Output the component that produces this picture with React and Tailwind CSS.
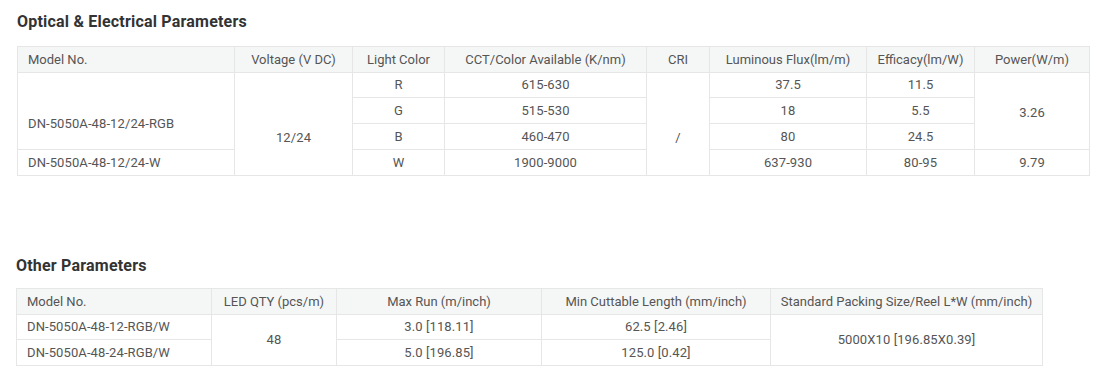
const optical = [
  { w: 217, label: "Model No.", left: true },
  { w: 118, label: "Voltage (V DC)" },
  { w: 92, label: "Light Color" },
  { w: 202, label: "CCT/Color Available (K/nm)" },
  { w: 63, label: "CRI" },
  { w: 157, label: "Luminous Flux(lm/m)" },
  { w: 108, label: "Efficacy(lm/W)" },
  { w: 115, label: "Power(W/m)" },
];

const other = [
  { w: 195, label: "Model No.", left: true },
  { w: 125, label: "LED QTY (pcs/m)" },
  { w: 205, label: "Max Run (m/inch)" },
  { w: 229, label: "Min Cuttable Length (mm/inch)" },
  { w: 272, label: "Standard Packing Size/Reel L*W (mm/inch)" },
];

const td = "border border-[#e6e6e6] text-center align-middle p-0";
const tdLeft = "border border-[#e6e6e6] text-left align-middle pl-[10px] p-0";

function Head({ cols }) {
  return (
    <>
      <colgroup>
        {cols.map((c, i) => (
          <col key={i} style={{ width: c.w }} />
        ))}
      </colgroup>
      <thead>
        <tr className="h-[26px] bg-[#f5f7f7]">
          {cols.map((c, i) => (
            <th
              key={i}
              className={`${c.left ? tdLeft : td} font-normal`}
            >
              {c.label}
            </th>
          ))}
        </tr>
      </thead>
    </>
  );
}

export default function App() {
  return (
    <div
      className="w-[1111px] h-[377px] bg-white text-[13px] text-[#555] leading-[20px]"
      style={{ fontFamily: "Roboto, 'Noto Sans', sans-serif" }}
    >
      <div className="pl-[17px] pt-[12px]">
        <h2 className="text-[16px] font-bold text-[#333] leading-[20px] tracking-[0.2px]">
          Optical &amp; Electrical Parameters
        </h2>

        <table className="mt-[14px] w-[1072px] table-fixed border-collapse">
          <Head cols={optical} />
          <tbody className="tracking-[0.1px]">
            <tr className="h-[25px]">
              <td rowSpan={3} className={`${tdLeft} pt-[26px]`}>DN-5050A-48-12/24-RGB</td>
              <td rowSpan={4} className={`${td} pt-[28px]`}>12/24</td>
              <td className={td}>R</td>
              <td className={td}>615-630</td>
              <td rowSpan={4} className={`${td} pt-[28px]`}>/</td>
              <td className={td}>37.5</td>
              <td className={td}>11.5</td>
              <td rowSpan={3} className={`${td} pt-[4px]`}>3.26</td>
            </tr>
            <tr className="h-[26px]">
              <td className={td}>G</td>
              <td className={td}>515-530</td>
              <td className={td}>18</td>
              <td className={td}>5.5</td>
            </tr>
            <tr className="h-[26px]">
              <td className={td}>B</td>
              <td className={td}>460-470</td>
              <td className={td}>80</td>
              <td className={td}>24.5</td>
            </tr>
            <tr className="h-[26px]">
              <td className={tdLeft}>DN-5050A-48-12/24-W</td>
              <td className={td}>W</td>
              <td className={td}>1900-9000</td>
              <td className={td}>637-930</td>
              <td className={td}>80-95</td>
              <td className={td}>9.79</td>
            </tr>
          </tbody>
        </table>
      </div>

      <div className="pl-[16px] pt-[80px]">
        <h2 className="text-[16px] font-bold text-[#333] leading-[20px] tracking-[0.2px]">
          Other Parameters
        </h2>

        <table className="mt-[12px] w-[1026px] table-fixed border-collapse">
          <Head cols={other} />
          <tbody className="tracking-[0.1px]">
            <tr className="h-[25px]">
              <td className={tdLeft}>DN-5050A-48-12-RGB/W</td>
              <td rowSpan={2} className={td}>48</td>
              <td className={td}>3.0 [118.11]</td>
              <td className={td}>62.5 [2.46]</td>
              <td rowSpan={2} className={td}>5000X10 [196.85X0.39]</td>
            </tr>
            <tr className="h-[26px]">
              <td className={tdLeft}>DN-5050A-48-24-RGB/W</td>
              <td className={td}>5.0 [196.85]</td>
              <td className={td}>125.0 [0.42]</td>
            </tr>
          </tbody>
        </table>
      </div>
    </div>
  );
}
